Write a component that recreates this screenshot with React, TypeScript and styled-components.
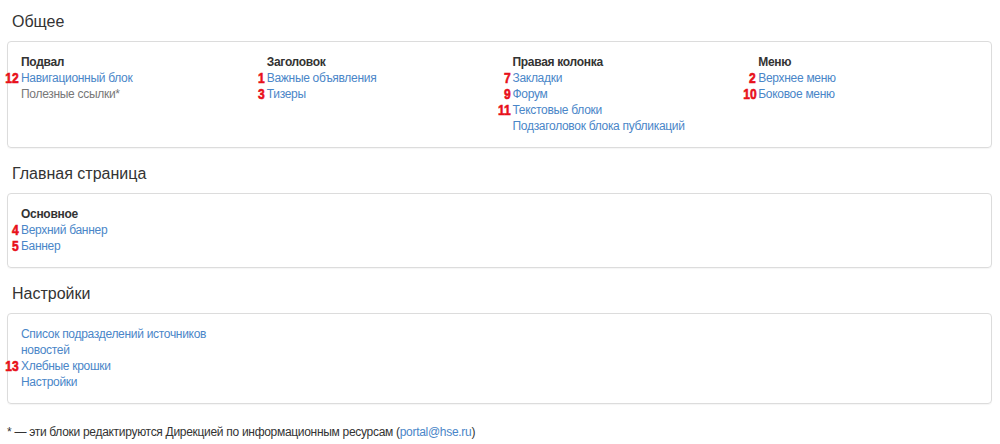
import React from 'react';
import styled, {createGlobalStyle} from "styled-components";

type Item = {title: string; num?: number; muted?: boolean};
type Group = {label?: string; items: Item[]};
type Section = {title: string; groups: Group[]};

const sections: Section[] = [
    {
        title: "Общее",
        groups: [
            {label: "Подвал", items: [{title: "Навигационный блок", num: 12}, {title: "Полезные ссылки*", muted: true}]},
            {label: "Заголовок", items: [{title: "Важные объявления", num: 1}, {title: "Тизеры", num: 3}]},
            {
                label: "Правая колонка", items: [
                    {title: "Закладки", num: 7},
                    {title: "Форум", num: 9},
                    {title: "Текстовые блоки", num: 11},
                    {title: "Подзаголовок блока публикаций"},
                ]
            },
            {label: "Меню", items: [{title: "Верхнее меню", num: 2}, {title: "Боковое меню", num: 10}]},
        ],
    },
    {
        title: "Главная страница",
        groups: [
            {label: "Основное", items: [{title: "Верхний баннер", num: 4}, {title: "Баннер", num: 5}]},
        ],
    },
    {
        title: "Настройки",
        groups: [
            {
                items: [
                    {title: "Список подразделений источников новостей"},
                    {title: "Хлебные крошки", num: 13},
                    {title: "Настройки"},
                ]
            },
        ],
    },
];

const GlobalStyle = createGlobalStyle`
    body {
        margin: 0;
        background: #fff;
        font-family: "Liberation Sans", Arial, sans-serif;
        font-size: 12px;
        line-height: 16px;
        letter-spacing: -0.3px;
        color: #333;
    }
`;

export default function App() {
    return (
        <StyledPage>
            <GlobalStyle/>
            {sections.map((section) => (
                <StyledSection key={section.title}>
                    <StyledSectionTitle>{section.title}</StyledSectionTitle>
                    <StyledPanel>
                        {section.groups.map((group, i) => (
                            <StyledColumn key={i}>
                                {group.label && <StyledGroupLabel>{group.label}</StyledGroupLabel>}
                                {group.items.map((item) => (
                                    <StyledItem key={item.title}>
                                        {item.num !== undefined && <StyledBadge>{item.num}</StyledBadge>}
                                        {item.muted
                                            ? <StyledMuted>{item.title}</StyledMuted>
                                            : <StyledLink href="#">{item.title}</StyledLink>}
                                    </StyledItem>
                                ))}
                            </StyledColumn>
                        ))}
                    </StyledPanel>
                </StyledSection>
            ))}
            <StyledFootnote>
                * — эти блоки редактируются Дирекцией по информационным ресурсам (<StyledLink
                href="#">portal@hse.ru</StyledLink>)
            </StyledFootnote>
        </StyledPage>
    );
}

const StyledPage = styled.div`
    padding: 12px 8px 0 7px;
`;

const StyledSection = styled.section`
    & + & {
        margin-top: 16px;
    }
`;

const StyledSectionTitle = styled.h2`
    margin: 0 0 9px 5px;
    font-size: 16px;
    line-height: 20px;
    font-weight: 400;
    letter-spacing: 0;
    color: #333;
`;

const StyledPanel = styled.div`
    display: grid;
    grid-template-columns: repeat(4, 1fr);
    padding: 12px 0 13px;
    border: 1px solid #dcdcdc;
    border-radius: 4px;
    box-shadow: 0 1px 1px rgba(0, 0, 0, 0.04);
`;

const StyledColumn = styled.div`
    display: flex;
    flex-direction: column;
    padding: 0 13px;
`;

const StyledGroupLabel = styled.div`
    font-weight: 700;
    color: #333;
`;

const StyledItem = styled.div`
    position: relative;
`;

const StyledBadge = styled.span`
    position: absolute;
    right: calc(100% + 2px);
    top: 50%;
    transform: translateY(-47%) scaleX(0.86);
    transform-origin: right center;
    font-family: "Liberation Sans", sans-serif;
    font-size: 14px;
    line-height: 14px;
    font-weight: 700;
    letter-spacing: 0;
    color: #e8101a;
    white-space: nowrap;
    -webkit-text-stroke: 0.6px #e8101a;
`;

const StyledLink = styled.a`
    color: #4a86c8;
    text-decoration: none;
`;

const StyledMuted = styled.span`
    color: #777;
`;

const StyledFootnote = styled.p`
    margin: 20px 0 0;
    color: #333;
`;
